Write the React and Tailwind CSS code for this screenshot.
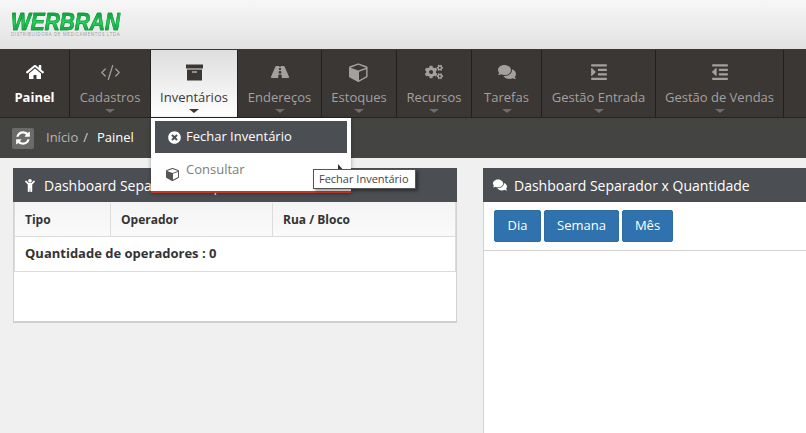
import React from "react";
import { FaHome, FaRoad, FaCogs, FaComments, FaIndent, FaOutdent, FaTimesCircle, FaChild } from "react-icons/fa";
import { CodeXml } from "lucide-react";

function ArchiveBox({ size }) {
  return (
    <svg width={size} height={size} viewBox="0 0 17 16" fill="currentColor">
      <path d="M0 0H17V4H0Z" />
      <path d="M1 5H16V16H1Z M6 7V8H11V7Z" fillRule="evenodd" />
    </svg>
  );
}

function Thin({ size }) {
  return <CodeXml size={size} strokeWidth={1.4} />;
}

function Cube({ size, className }) {
  return (
    <svg className={className} width={size} height={size} viewBox="0 0 1792 1792" fill="currentColor">
      <path d="M896 1629l640-349v-636l-640 233v752zm-64-865l698-254-698-254-698 254zm832-252v768q0 35-18 65t-49 47l-704 384q-28 16-61 16t-61-16l-704-384q-31-17-49-47t-18-65v-768q0-40 23-73t61-49l704-256q22-8 44-8t44 8l704 256q38 16 61 49t23 73z" />
    </svg>
  );
}

function Refresh({ size }) {
  return (
    <svg width={size} height={size} viewBox="0 0 1792 1792" fill="currentColor">
      <path d="M1639 1056q0 5-1 7-64 268-268 434.5t-478 166.5q-146 0-282.5-55t-243.5-157l-129 129q-19 19-45 19t-45-19-19-45v-448q0-26 19-45t45-19h448q26 0 45 19t19 45-19 45l-137 137q71 66 161 102t187 36q134 0 250-65t186-179q11-17 53-117 8-23 30-23h192q13 0 22.5 9.5t9.5 22.5zm25-800v448q0 26-19 45t-45 19h-448q-26 0-45-19t-19-45 19-45l138-138q-148-137-349-137-134 0-250 65t-186 179q-11 17-53 117-8 23-30 23h-199q-13 0-22.5-9.5t-9.5-22.5v-7q65-268 270-434.5t480-166.5q146 0 284 55.5t245 156.5l130-129q19-19 45-19t45 19 19 45z" />
    </svg>
  );
}

const items = [
  { label: "Cadastros", icon: Thin, w: "w-[81px]", size: 21 },
  { label: "Inventários", icon: ArchiveBox, w: "w-[87px]", size: 17, active: true },
  { label: "Endereços", icon: FaRoad, w: "w-[84px]", size: 18 },
  { label: "Estoques", icon: Cube, w: "w-[75px]", size: 20 },
  { label: "Recursos", icon: FaCogs, w: "w-[75px]", size: 18 },
  { label: "Tarefas", icon: FaComments, w: "w-[70px]", size: 18 },
  { label: "Gestão Entrada", icon: FaIndent, w: "w-[114px]", size: 18 },
  { label: "Gestão de Vendas", icon: FaOutdent, w: "w-[128px]", size: 18 },
];

function Caret({ dark }) {
  return (
    <span className={`mt-[2px] h-0 w-0 border-x-[5px] border-t-[4px] border-x-transparent ${dark ? "border-t-[#3b3735]" : "border-t-[#6f6c69]"}`} />
  );
}

function NavItem({ label, icon: Icon, w, size, active }) {
  return (
    <div className={`${w} h-full shrink-0 flex flex-col items-center pt-[12px] border-r border-[#23211f] ${active ? "bg-gradient-to-b from-[#dedede] to-white text-[#3b3735]" : "text-[#a3a19f]"}`}>
      <span className="h-[20px] shrink-0 flex items-center justify-center"><Icon size={size} /></span>
      <span className="mt-[5px] text-[13px] leading-[20px] whitespace-nowrap">{label}</span>
      <Caret dark={active} />
    </div>
  );
}

function PanelHead({ icon: Icon, size, children }) {
  return (
    <div className="h-[34px] bg-[#4b4e53] text-white flex items-center pl-[9px] text-[14px] whitespace-nowrap">
      <Icon size={size} className="mr-[7px] ml-[1px] w-[14px]" />
      <span>{children}</span>
    </div>
  );
}

export default function App() {
  return (
    <div className="relative h-[433px] w-[806px] overflow-hidden bg-[#f0f0f0] font-['Open_Sans',sans-serif]">
      <header className="h-[49px] bg-gradient-to-b from-[#f7f7f7] to-[#e2e2e2] pl-[11px] pt-[12px]">
        <div className="w-[112px] leading-none">
          <div className="inline-block align-top text-[24px] leading-[20px] h-[20px] font-black italic font-['Liberation_Sans',sans-serif] [transform:scaleX(0.87)] origin-left [-webkit-text-stroke:0.7px_#0a9a3c] bg-gradient-to-b from-[#0b9a3c] via-[#2fcf5e] to-[#0b9a3c] bg-clip-text text-transparent">WERBRAN</div>
          <div className="text-[4.5px] leading-[5px] text-[#9a9a9a] tracking-[0.6px] whitespace-nowrap">DISTRIBUIDORA DE MEDICAMENTOS LTDA</div>
        </div>
      </header>

      <nav className="h-[69px] bg-[#3b3734] flex border-b border-[#262422] border-t border-t-[#3b3734]">
        <div className="w-[70px] h-full shrink-0 flex flex-col items-center pt-[12px] border-r border-[#23211f] text-white">
          <span className="h-[20px] flex items-center justify-center"><FaHome size={18} /></span>
          <span className="mt-[5px] text-[13px] leading-[20px] font-bold">Painel</span>
        </div>
        {items.map((it) => <NavItem key={it.label} {...it} />)}
      </nav>

      <div className="h-[40px] bg-[#444442] flex items-center pl-[12px] text-[13px]">
        <span className="w-[22px] h-[21px] rounded-[2px] bg-[#6b6b6a] text-white flex items-center justify-center"><Refresh size={16} /></span>
        <span className="ml-[12px] text-[#b5b5b5]">Início</span>
        <span className="ml-[5px] text-[#d0d0d0]">/</span>
        <span className="ml-[9px] text-white">Painel</span>
      </div>

      <main className="flex items-start gap-[26px] pl-[13px] pt-[10px]">
        <section className="w-[444px] shrink-0 border-x border-b-2 border-[#cfcfcf] border-x-[#d2d2d2] bg-white">
          <div className="-mx-px"><PanelHead icon={FaChild} size={13}>Dashboard Separador x Operador</PanelHead></div>
          <div className="h-[119px] text-[12px] font-bold text-[#333]">
            <div className="h-[35px] flex border-x border-b border-[#dcdcdc] bg-gradient-to-b from-[#f4f4f4] to-[#fafafa] items-center pt-[1px]">
              <div className="w-[96px] h-full pl-[10px] flex items-center border-r border-[#dcdcdc]">Tipo</div>
              <div className="w-[162px] h-full pl-[10px] flex items-center border-r border-[#dcdcdc]">Operador</div>
              <div className="pl-[10px]">Rua / Bloco</div>
            </div>
            <div className="h-[35px] flex items-center pl-[10px] border-x border-b border-[#dcdcdc] text-[13px]">Quantidade de operadores : 0</div>
          </div>
        </section>

        <section className="w-[340px] shrink-0 h-[300px] bg-white border-l border-[#d2d2d2]">
          <div className="-ml-px"><PanelHead icon={FaComments} size={14}>Dashboard Separador x Quantidade</PanelHead></div>
          <div className="h-[49px] flex items-start gap-[3px] pl-[10px] pt-[8px] border-b border-[#d2d2d2] text-[13px] text-white">
            <button className="w-[47px] h-[32px] rounded-[2px] bg-[#2f72ad] border border-[#2e6da4]">Dia</button>
            <button className="w-[75px] h-[32px] rounded-[2px] bg-[#2f72ad] border border-[#2e6da4]">Semana</button>
            <button className="w-[51px] h-[32px] rounded-[2px] bg-[#2f72ad] border border-[#2e6da4]">Mês</button>
          </div>
        </section>
      </main>

      {/* dropdown menu */}
      <div className="absolute left-[151px] top-[118px] w-[200px] h-[75px] bg-white border-b-2 border-[#c0392b] shadow-[0_1px_4px_rgba(0,0,0,0.35)] px-[4px] pt-[3px] text-[13px]">
        <div className="h-[32px] bg-[#4b4e53] text-white flex items-center pl-[13px]">
          <FaTimesCircle size={13} className="mr-[5px]" />
          <span>Fechar Inventário</span>
        </div>
        <div className="relative h-[34px] text-[#7c7c7c]">
          <Cube size={14} className="absolute left-[11px] top-[14px] text-[#555]" />
          <span className="absolute left-[31px] top-[7px]">Consultar</span>
        </div>
      </div>

      {/* mouse pointer */}
      <svg className="absolute left-[338px] top-[164px]" width="8" height="12" viewBox="0 0 8 12">
        <path d="M0 0 L0 10 L3 8 L7 8 Z" fill="#333" />
      </svg>

      {/* tooltip */}
      <div className="absolute left-[313px] top-[169px] h-[20px] w-[103px] bg-white border border-[#555] shadow-[2px_2px_3px_rgba(0,0,0,0.4)] text-[11px] leading-[18px] text-[#444] pl-[5px] whitespace-nowrap">Fechar Inventário</div>
    </div>
  );
}
